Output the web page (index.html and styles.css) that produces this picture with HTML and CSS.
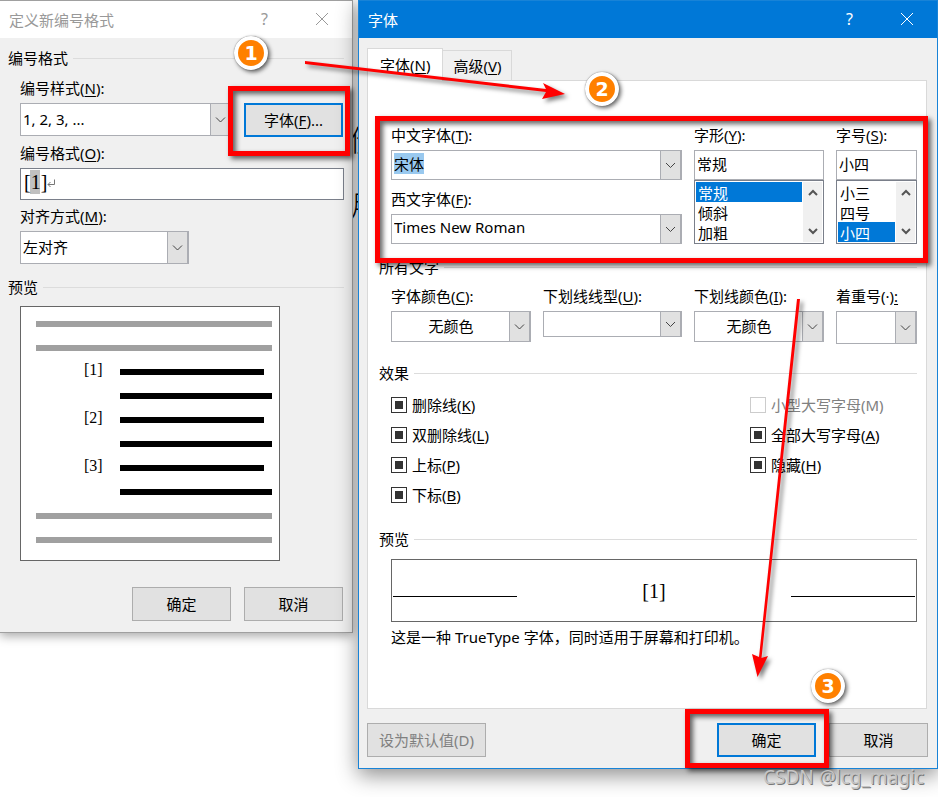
FILE: index.html
```html
<!DOCTYPE html>
<html lang="zh-CN">
<head>
    <meta charset="UTF-8">
    <meta name="viewport" content="width=device-width, initial-scale=1.0">
    <title>定义新编号格式</title>
    <link rel="stylesheet" href="styles.css">
</head>
<body>

<div class="desktop">

    <!-- Numbering format dialog -->
    <div class="window inactive">
        <div class="titlebar">
            <h1>定义新编号格式</h1>
            <button class="title-btn" type="button" aria-label="帮助">?</button>
            <button class="title-btn" type="button" aria-label="关闭">
                <svg width="14" height="14" viewBox="0 0 14 14"><path d="M1 1L13 13M13 1L1 13"/></svg>
            </button>
        </div>
        <div class="number-body">
            <h2 class="section">编号格式</h2>
            <div class="number-fields">
                <div class="number-row">
                    <div class="field grow">
                        <label for="numStyle">编号样式(<u>N</u>):</label>
                        <div class="drop tall">
                            <select id="numStyle"><option>1, 2, 3, ...</option></select>
                            <svg class="chevron" viewBox="0 0 19 18"><path d="M5 7L9.500 11.500L14 7"/></svg>
                        </div>
                    </div>
                    <div class="marked">
                        <button class="btn primary" type="button">字体(<u>F</u>)...</button>
                        <div class="mark mark-font"></div>
                    </div>
                </div>
                <div class="field">
                    <label for="numFormat">编号格式(<u>O</u>):</label>
                    <div class="format-box">
                        <input id="numFormat" type="text" value="[1]">
                        <svg class="return-mark" width="9" height="10" viewBox="0 0 9 10"><path d="M7.500 0.500V5.500H1M3.500 3L1 5.500L3.500 8"/></svg>
                    </div>
                </div>
                <div class="field align-field">
                    <label for="align">对齐方式(<u>M</u>):</label>
                    <div class="drop tall">
                        <select id="align"><option>左对齐</option></select>
                        <svg class="chevron" viewBox="0 0 19 18"><path d="M5 7L9.500 11.500L14 7"/></svg>
                    </div>
                </div>
            </div>
            <h2 class="section">预览</h2>
            <div class="list-preview">
                <div class="bar gray"></div>
                <div class="bar gray"></div>
                <div class="list-item"><span>[1]</span><div class="bar short"></div></div>
                <div class="list-item"><div class="bar"></div></div>
                <div class="list-item"><span>[2]</span><div class="bar short"></div></div>
                <div class="list-item"><div class="bar"></div></div>
                <div class="list-item"><span>[3]</span><div class="bar short"></div></div>
                <div class="list-item"><div class="bar"></div></div>
                <div class="bar gray"></div>
                <div class="bar gray"></div>
            </div>
            <div class="number-actions">
                <button class="btn" type="button">确定</button>
                <button class="btn" type="button">取消</button>
            </div>
        </div>
        <div class="badge badge-1">1</div>
    </div>

    <!-- Document text showing between the dialogs -->
    <div class="document"><span>价</span><span>月</span></div>

    <!-- Font dialog -->
    <div class="window active">
        <div class="titlebar">
            <h1>字体</h1>
            <button class="title-btn" type="button" aria-label="帮助">?</button>
            <button class="title-btn" type="button" aria-label="关闭">
                <svg width="14" height="14" viewBox="0 0 14 14"><path d="M1 1L13 13M13 1L1 13"/></svg>
            </button>
        </div>
        <div class="font-body">
            <div class="tabs">
                <button class="tab selected" type="button">字体(<u>N</u>)</button>
                <button class="tab" type="button">高级(<u>V</u>)</button>
            </div>
            <div class="panel">
                <div class="font-grid font-picks">
                    <div class="font-names">
                        <div class="field">
                            <label for="cnFont">中文字体(<u>T</u>):</label>
                            <div class="drop">
                                <input id="cnFont" type="text" value="宋体">
                                <svg class="chevron" viewBox="0 0 19 18"><path d="M5 7L9.500 11.500L14 7"/></svg>
                            </div>
                        </div>
                        <div class="field">
                            <label for="enFont">西文字体(<u>F</u>):</label>
                            <div class="drop">
                                <select id="enFont"><option>Times New Roman</option></select>
                                <svg class="chevron" viewBox="0 0 19 18"><path d="M5 7L9.500 11.500L14 7"/></svg>
                            </div>
                        </div>
                    </div>
                    <div class="field">
                        <label for="fontStyle">字形(<u>Y</u>):</label>
                        <div>
                            <input id="fontStyle" class="list-input" type="text" value="常规">
                            <div class="listbox">
                                <select size="3" aria-label="字形">
                                    <option selected>常规</option>
                                    <option>倾斜</option>
                                    <option>加粗</option>
                                </select>
                                <div class="scroller">
                                    <svg width="10" height="7" viewBox="0 0 10 7"><path d="M1 6L5 2L9 6"/></svg>
                                    <svg width="10" height="7" viewBox="0 0 10 7"><path d="M1 1L5 5L9 1"/></svg>
                                </div>
                            </div>
                        </div>
                    </div>
                    <div class="field">
                        <label for="fontSize">字号(<u>S</u>):</label>
                        <div>
                            <input id="fontSize" class="list-input" type="text" value="小四">
                            <div class="listbox">
                                <select size="3" aria-label="字号">
                                    <option>小三</option>
                                    <option>四号</option>
                                    <option selected>小四</option>
                                </select>
                                <div class="scroller">
                                    <svg width="10" height="7" viewBox="0 0 10 7"><path d="M1 6L5 2L9 6"/></svg>
                                    <svg width="10" height="7" viewBox="0 0 10 7"><path d="M1 1L5 5L9 1"/></svg>
                                </div>
                            </div>
                        </div>
                    </div>
                    <div class="mark mark-picks"></div>
                </div>

                <h2 class="section">所有文字</h2>
                <div class="font-grid">
                    <div class="field">
                        <label for="fontColor">字体颜色(<u>C</u>):</label>
                        <div class="drop centered">
                            <select id="fontColor"><option>无颜色</option></select>
                            <svg class="chevron" viewBox="0 0 19 18"><path d="M5 7L9.500 11.500L14 7"/></svg>
                        </div>
                    </div>
                    <div class="field">
                        <label for="underline">下划线线型(<u>U</u>):</label>
                        <div class="drop low">
                            <select id="underline"><option></option></select>
                            <svg class="chevron" viewBox="0 0 19 18"><path d="M5 7L9.500 11.500L14 7"/></svg>
                        </div>
                    </div>
                    <div class="field">
                        <label for="underlineColor">下划线颜色(<u>I</u>):</label>
                        <div class="drop centered">
                            <select id="underlineColor"><option>无颜色</option></select>
                            <svg class="chevron" viewBox="0 0 19 18"><path d="M5 7L9.500 11.500L14 7"/></svg>
                        </div>
                    </div>
                    <div class="field">
                        <label for="emphasis">着重号(·)<u>:</u></label>
                        <div class="drop tall">
                            <select id="emphasis"><option></option></select>
                            <svg class="chevron" viewBox="0 0 19 18"><path d="M5 7L9.500 11.500L14 7"/></svg>
                        </div>
                    </div>
                </div>

                <h2 class="section effects-title">效果</h2>
                <div class="effects">
                    <div class="checks">
                        <label><input type="checkbox" class="mixed">删除线(<u>K</u>)</label>
                        <label><input type="checkbox" class="mixed">双删除线(<u>L</u>)</label>
                        <label><input type="checkbox" class="mixed">上标(<u>P</u>)</label>
                        <label><input type="checkbox" class="mixed">下标(<u>B</u>)</label>
                    </div>
                    <div class="checks">
                        <label class="disabled"><input type="checkbox" disabled>小型大写字母(M)</label>
                        <label><input type="checkbox" class="mixed">全部大写字母(<u>A</u>)</label>
                        <label><input type="checkbox" class="mixed">隐藏(<u>H</u>)</label>
                    </div>
                </div>

                <h2 class="section preview-title">预览</h2>
                <div class="font-preview"><i></i><span>[1]</span><i></i></div>
                <p class="note">这是一种 TrueType 字体，同时适用于屏幕和打印机。</p>
            </div>
            <div class="font-actions">
                <button class="btn wide" type="button" disabled>设为默认值(D)</button>
                <div class="marked">
                    <button class="btn primary" type="button">确定</button>
                    <div class="mark mark-ok"></div>
                </div>
                <button class="btn" type="button">取消</button>
            </div>
        </div>
        <div class="badge badge-2">2</div>
        <div class="badge badge-3">3</div>
    </div>

    <!-- Step arrows -->
    <svg class="arrows" viewBox="0 0 938 797" preserveAspectRatio="none">
        <path d="M305 61L546 89L543 83L565 94L542 99L546 92L305 64Z"/>
        <path d="M797 299L759 657L752 654L757.500 677L768 656L761.500 658L800 299Z"/>
    </svg>
    <div class="watermark">CSDN @lcg_magic</div>
</div>

<script>
    document.querySelectorAll(".mixed").forEach(box => {
        box.indeterminate = true;
    });

    const cnFont = document.getElementById("cnFont");
    cnFont.focus();
    cnFont.select();
</script>

</body>
</html>
```

FILE: styles.css
```css
* {
    box-sizing: border-box;
}

body {
    margin: 0;
    background: #fff;
    color: #000;
    font-family: "Noto Sans", "Noto Sans CJK SC", sans-serif;
    font-size: 15px;
    line-height: 20px;
}

h1, h2, p {
    margin: 0;
    font-size: 15px;
    font-weight: normal;
}

input, select, button {
    font: inherit;
    color: inherit;
    margin: 0;
    border-radius: 0;
    outline: none;
}

u {
    text-underline-offset: 2px;
}

svg {
    fill: none;
}

.desktop {
    position: relative;
    display: grid;
    grid-template-columns: 353fr 5px 580fr;
    align-items: start;
    min-height: 100vh;
    overflow: hidden;
}

/* Windows */
.window {
    position: relative;
    background: #f0f0f0;
    border: 1px solid #a0a0a0;
}

.inactive {
    border-left: none;
    box-shadow: 0 3px 10px rgba(0, 0, 0, 0.35);
}

.active {
    border-color: #1883d7;
    z-index: 1;
    box-shadow: 0 6px 20px rgba(0, 0, 0, 0.45);
}

.titlebar {
    display: flex;
    align-items: center;
    height: 37px;
    padding: 0 2px 0 9px;
    background: #fff;
    color: #999;
}

.titlebar h1 {
    flex: 1;
}

.active .titlebar {
    background: #0078d7;
    color: #fff;
}

.title-btn {
    width: 57px;
    height: 36px;
    padding: 0 0 2px;
    border: none;
    background: none;
    font-size: 16px;
}

.title-btn svg {
    display: block;
    margin: 0 auto;
    stroke: currentColor;
}

.section {
    display: flex;
    align-items: center;
    gap: 5px;
}

.section::after {
    content: "";
    flex: 1;
    height: 1px;
    background: #dcdcdc;
}

/* Fields */
.field {
    display: flex;
    flex-direction: column;
    gap: 6px;
    min-width: 0;
}

.field label {
    line-height: 18px;
}

.drop {
    position: relative;
    height: 30px;
}

.drop.tall {
    height: 33px;
}

.drop.low {
    height: 26px;
}

.drop select,
.drop input {
    appearance: none;
    display: block;
    width: 100%;
    height: 100%;
    padding: 0 22px 4px 2px;
    border: 1px solid #abadb3;
    background: #fff;
}

.drop.tall select {
    padding-bottom: 2px;
}

.drop.centered {
    height: 31px;
}

.centered select {
    padding-bottom: 2px;
    text-align: center;
    text-align-last: center;
}

.chevron {
    position: absolute;
    top: 0;
    right: 0;
    width: 22px;
    height: 100%;
    background: #e1e1e1;
    border: 1px solid #abadb3;
    border-right-width: 2px;
    pointer-events: none;
    stroke: #444;
}

input::selection {
    background: #99c9ef;
    color: #000;
}

.btn {
    width: 99px;
    height: 34px;
    padding: 0;
    border: 1px solid #adadad;
    background: #e1e1e1;
}

.btn.primary {
    border: 2px solid #0078d7;
}

.btn.wide {
    width: 119px;
}

.btn:disabled {
    color: #808080;
}

.marked {
    position: relative;
    display: flex;
}

/* Numbering dialog */
.number-body {
    padding: 10px 8px 11px;
}

.number-fields {
    display: flex;
    flex-direction: column;
    gap: 7px;
    padding: 11px 0 13px 12px;
}

.number-row {
    display: flex;
    align-items: flex-end;
    gap: 12px;
}

.number-row .field {
    flex: 1;
    padding-bottom: 1px;
}

.number-row .marked {
    margin-right: 1px;
}

.format-box {
    position: relative;
    height: 32px;
}

/* the gray strip is the field shading behind the number */
.format-box input {
    width: 100%;
    height: 32px;
    padding: 0 3px 4px;
    border: 1px solid #7a7f8a;
    background: linear-gradient(#c0c0c0, #c0c0c0) 9px 1px / 10px 24px no-repeat #fff;
    font-family: "Liberation Serif", serif;
    font-size: 20px;
}

.return-mark {
    position: absolute;
    left: 27px;
    top: 11px;
    stroke: #777;
}

.align-field {
    width: 169px;
}

.list-preview {
    display: flex;
    flex-direction: column;
    gap: 18px;
    width: 260px;
    margin: 9px 0 26px 12px;
    padding: 14px 7px 17px 15px;
    border: 1px solid #666;
    background: #fff;
}

.bar {
    flex: 1;
    height: 6px;
    background: #000;
}

.bar.gray {
    flex: none;
    background: #a0a0a0;
}

.bar.short {
    margin-right: 8px;
}

.list-item {
    display: flex;
    align-items: center;
    height: 6px;
    padding-left: 84px;
    font-family: "Liberation Serif", serif;
    font-size: 16px;
}

.list-item span {
    width: 36px;
    margin-left: -36px;
    padding-bottom: 4px;
}

.number-actions {
    display: flex;
    justify-content: flex-end;
    gap: 13px;
    padding-right: 1px;
}

/* Document behind */
.document {
    display: flex;
    flex-direction: column;
    gap: 36px;
    align-self: stretch;
    padding-top: 123px;
    overflow: hidden;
    font-family: "Noto Sans CJK SC", sans-serif;
    font-size: 30px;
    font-weight: 300;
    line-height: 30px;
    text-indent: -4px;
}

/* Font dialog */
.font-body {
    padding: 10px 9px 11px 8px;
}

.tabs {
    display: flex;
    align-items: flex-end;
}

.tab {
    height: 30px;
    padding: 0 10px;
    border: 1px solid #d9d9d9;
    border-bottom: none;
    border-left: none;
    background: #f0f0f0;
}

.tab.selected {
    position: relative;
    height: 33px;
    margin-bottom: -1px;
    padding: 0 12px;
    border-left: 1px solid #d9d9d9;
    background: #fff;
}

.panel {
    padding: 45px 9px 60px 11px;
    margin-right: 1px;
    border: 1px solid #d9d9d9;
    background: #fff;
}

.font-grid {
    display: grid;
    grid-template-columns: 140fr 139fr 130fr 81fr;
    gap: 12px;
    align-items: start;
    margin: 10px 0 0 12px;
}

.font-picks {
    position: relative;
    margin: 0 0 13px 12px;
}

.font-names {
    grid-column: span 2;
    display: flex;
    flex-direction: column;
    gap: 10px;
}

.list-input {
    display: block;
    width: 100%;
    height: 30px;
    padding: 0 2px 4px;
    border: 1px solid #abadb3;
    background: #fff;
}

.listbox {
    display: flex;
    height: 64px;
    padding: 1px;
    border: 1px solid #7a7f8a;
    background: #fff;
}

.listbox select {
    flex: 1;
    min-width: 0;
    height: 60px;
    padding: 0;
    border: none;
    background: #fff;
    overflow: hidden;
    scrollbar-width: none;
}

.listbox option {
    height: 20px;
    min-height: 20px;
    padding: 0 2px;
    line-height: 18px;
}

.listbox option:checked {
    background: linear-gradient(#0078d7, #0078d7);
    color: #fff;
}

.scroller {
    display: flex;
    flex-direction: column;
    align-items: center;
    justify-content: space-between;
    width: 20px;
    padding: 7px 0;
    border-left: 1px solid #fff;
    background: #f0f0f0;
    stroke: #555;
    stroke-width: 2;
}

.effects-title {
    margin-top: 19px;
}

.effects {
    display: grid;
    grid-template-columns: 359fr 167fr;
    padding: 12px 0 24px 12px;
}

.checks {
    display: flex;
    flex-direction: column;
    gap: 10px;
}

.checks label {
    display: flex;
    align-items: center;
    white-space: nowrap;
}

.checks input {
    appearance: none;
    width: 16px;
    height: 16px;
    margin-right: 5px;
    padding: 3px;
    border: 1px solid #333;
    background: #fff;
}

.checks input:indeterminate {
    background: #333 content-box;
}

.checks .disabled {
    color: #808080;
}

.checks .disabled input {
    border-color: #ccc;
}

.font-preview {
    display: flex;
    align-items: center;
    justify-content: space-between;
    height: 63px;
    margin: 10px 0 5px 12px;
    padding: 0 1px;
    border: 1px solid #666;
    font-family: "Liberation Serif", serif;
    font-size: 20px;
}

.font-preview i {
    width: 124px;
    height: 1px;
    margin-top: 12px;
    background: #000;
}

.note {
    padding: 0 0 1px 12px;
}

.font-actions {
    display: flex;
    gap: 13px;
    margin-top: 14px;
}

.font-actions .wide {
    margin-right: auto;
}

/* Callouts */
.mark {
    position: absolute;
    z-index: 2;
    border: 5px solid #f00;
    pointer-events: none;
    box-shadow: 3px 3px 5px rgba(0, 0, 0, 0.6), inset 3px 3px 5px rgba(0, 0, 0, 0.6);
}

.mark-font {
    inset: -17px -7px -19px -16px;
}

.mark-picks {
    inset: -10px -11px -19px -16px;
}

.mark-ok {
    inset: -14px -13px -11px -32px;
}

.badge {
    position: absolute;
    z-index: 3;
    width: 34px;
    height: 34px;
    border: 4px solid #fff;
    border-radius: 50%;
    background: #ff8000;
    box-shadow: 2px 2px 4px rgba(0, 0, 0, 0.6), 0 0 1px rgba(0, 0, 0, 0.6);
    color: #fff;
    font: bold 19px/26px "DejaVu Sans", sans-serif;
    text-align: center;
}

.badge-1 {
    top: 35px;
    right: 84px;
}

.badge-2 {
    top: 71px;
    right: 318px;
}

.badge-3 {
    right: 92px;
    bottom: 65px;
}

.arrows {
    position: absolute;
    top: 0;
    left: 0;
    z-index: 3;
    width: 100%;
    height: 797px;
    fill: #f00;
    filter: drop-shadow(3px 3px 2px rgba(0, 0, 0, 0.5));
    pointer-events: none;
}

.watermark {
    position: absolute;
    top: 765px;
    right: 14px;
    z-index: 4;
    color: #c4c4c4;
    font-size: 19px;
    line-height: 24px;
    text-shadow: 1px 1px 0 #777;
}
```
